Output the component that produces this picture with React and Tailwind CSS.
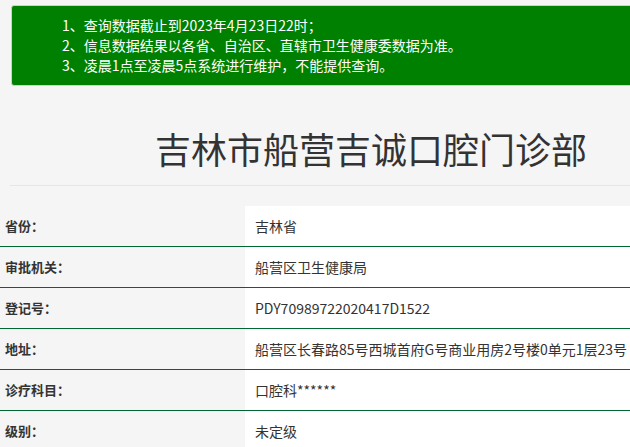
export default function App() {
  const rows = [
    ["省份：", "吉林省"],
    ["审批机关：", "船营区卫生健康局"],
    ["登记号：", "PDY70989722020417D1522"],
    ["地址：", "船营区长春路85号西城首府G号商业用房2号楼0单元1层23号"],
    ["诊疗科目：", "口腔科******"],
    ["级别：", "未定级"],
  ];
  return (
    <div
      className="w-[630px] h-[447px] overflow-hidden bg-[#f5f5f5] text-[#333]"
      style={{ fontFamily: '"Noto Sans CJK SC", "Noto Sans", sans-serif' }}
    >
      <div className="pt-[5px] pl-[11px]">
        <div className="w-[660px] h-[81px] bg-[#008000] border border-[#d8cfbf] rounded-[3px] pt-[9px] pl-[50px] text-white text-[14px] leading-[20px]">
          <div>1、查询数据截止到2023年4月23日22时；</div>
          <div>2、信息数据结果以各省、自治区、直辖市卫生健康委数据为准。</div>
          <div>3、凌晨1点至凌晨5点系统进行维护，不能提供查询。</div>
        </div>
      </div>
      <div className="h-[99px] pl-[155px] pt-[38px] text-[36px] leading-[48px] text-[#333] whitespace-nowrap">
        吉林市船营吉诚口腔门诊部
      </div>
      <div className="ml-[10px] h-px bg-[#e6e6e6]"></div>
      <div className="mt-[20px]">
        {rows.map(([k, v], i) => (
          <div key={i} className="flex h-[41px] border-b border-[#006633]">
            <div className="w-[245px] shrink-0 pl-[5px] flex items-center text-[13px] font-bold text-[#333]">
              {k}
            </div>
            <div className="flex-1 bg-white pl-[10px] flex items-center text-[14px] text-[#333] whitespace-nowrap">
              {v}
            </div>
          </div>
        ))}
      </div>
    </div>
  );
}
